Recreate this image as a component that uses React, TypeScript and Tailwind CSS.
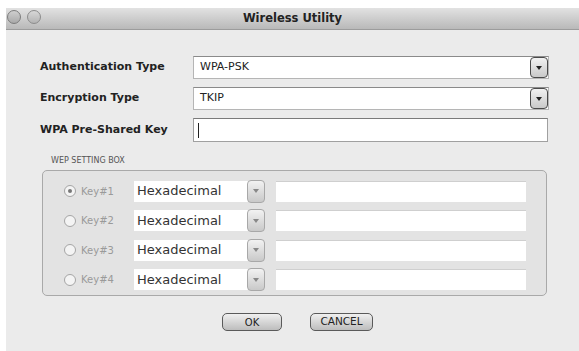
import React from 'react';

const font = { fontFamily: '"DejaVu Sans", Verdana, sans-serif' };

function ArrowButton({ small = false }: { small?: boolean }) {
  return (
    <div
      className={`flex items-center justify-center rounded-[4px] bg-gradient-to-b from-[#f2f2f2] to-[#c9c9c9] ${
        small
          ? 'w-[18px] h-[23px] border border-[#a8a8a8]'
          : 'w-[18px] h-[21px] border-[1.5px] border-[#4a4a4a]'
      }`}
    >
      <svg width="6" height="4" viewBox="0 0 6 4">
        <path d="M0 0 L6 0 L3 4 Z" fill={small ? '#888' : '#222'} />
      </svg>
    </div>
  );
}

function SelectRow({ label, value }: { label: string; value: string }) {
  return (
    <div className="flex items-center h-[23px]">
      <div className="w-[153px] text-[11px] font-bold text-[#222]">{label}</div>
      <div className="flex-1 flex items-center h-full bg-white border border-[#b5b5b5] border-t-[#8a8a8a] pl-[6px]">
        <span className="flex-1 text-[11px] text-[#222]">{value}</span>
      </div>
      <div className="-ml-[19px]">
        <ArrowButton />
      </div>
    </div>
  );
}

function KeyRow({ n, checked }: { n: number; checked?: boolean }) {
  return (
    <div className="flex items-center h-[22px]">
      <div className="w-[12px] h-[12px] rounded-full border border-[#a5a5a5] bg-[#f4f4f4] flex items-center justify-center">
        {checked && <div className="w-[4px] h-[4px] rounded-full bg-[#777]" />}
      </div>
      <span className="ml-[5px] w-[53px] text-[10px] text-[#9a9a9a]">Key#{n}</span>
      <div className="flex items-center w-[114px] h-[21px] bg-white pl-[3px]">
        <span className="text-[13px] text-[#333]">Hexadecimal</span>
      </div>
      <div className="-ml-[1px]">
        <ArrowButton small />
      </div>
      <div className="ml-[11px] flex-1 h-[21px] bg-white border-t border-[#cfcfcf]" />
    </div>
  );
}

export default function App() {
  return (
    <div className="w-[579px] h-[351px] bg-white overflow-hidden" style={font}>
      <div className="ml-[6px] mt-[8px] w-[573px] h-[343px] flex flex-col bg-[#ebebeb]">
        <div className="relative h-[22px] flex items-center justify-center bg-gradient-to-b from-[#e2e2e2] to-[#b9b9b9] border-b border-[#9c9c9c]">
          <div className="absolute left-[1px] top-[2px] flex gap-[6px]">
            <div className="w-[14px] h-[14px] rounded-full border-[1.5px] border-[#7c7c7c] bg-gradient-to-b from-[#cfcfcf] to-[#a9a9a9]" />
            <div className="w-[14px] h-[14px] rounded-full border-[1.5px] border-[#8c8c8c] bg-gradient-to-b from-[#d8d8d8] to-[#b3b3b3]" />
          </div>
          <span className="text-[11.5px] font-bold text-[#222]">Wireless Utility</span>
        </div>

        <div className="flex flex-col pl-[34px] pr-[31px] pt-[26px] gap-[8px]">
          <SelectRow label="Authentication Type" value="WPA-PSK" />
          <SelectRow label="Encryption Type" value="TKIP" />
          <div className="flex items-center h-[24px]">
            <div className="w-[153px] text-[11px] font-bold text-[#222]">WPA Pre-Shared Key</div>
            <div className="flex-1 h-full bg-white border border-[#a0a0a0] border-t-[#7a7a7a] flex items-center pl-[4px]">
              <div className="w-[1px] h-[15px] bg-[#222]" />
            </div>
          </div>
        </div>

        <div className="pl-[45px] mt-[14px] text-[8px] text-[#555] leading-[10px]">WEP SETTING BOX</div>
        <div className="ml-[36px] mr-[32px] mt-[4px] h-[126px] rounded-[5px] border border-[#a9a9a9] bg-[#e3e3e3] pl-[21px] pr-[20px] pt-[9px] flex flex-col gap-[7.5px]">
          <KeyRow n={1} checked />
          <KeyRow n={2} />
          <KeyRow n={3} />
          <KeyRow n={4} />
        </div>

        <div className="flex justify-center gap-[28px] mt-[17px] pl-[10px]">
          <div className="w-[60px] h-[18px] rounded-[5px] border border-[#5a5a5a] bg-gradient-to-b from-[#f0f0f0] to-[#bdbdbd] flex items-center justify-center text-[10px] text-[#222]">
            OK
          </div>
          <div className="w-[63px] h-[18px] rounded-[5px] border border-[#5a5a5a] bg-gradient-to-b from-[#f0f0f0] to-[#bdbdbd] flex items-center justify-center text-[10.5px] text-[#222]">
            CANCEL
          </div>
        </div>
      </div>
    </div>
  );
}
